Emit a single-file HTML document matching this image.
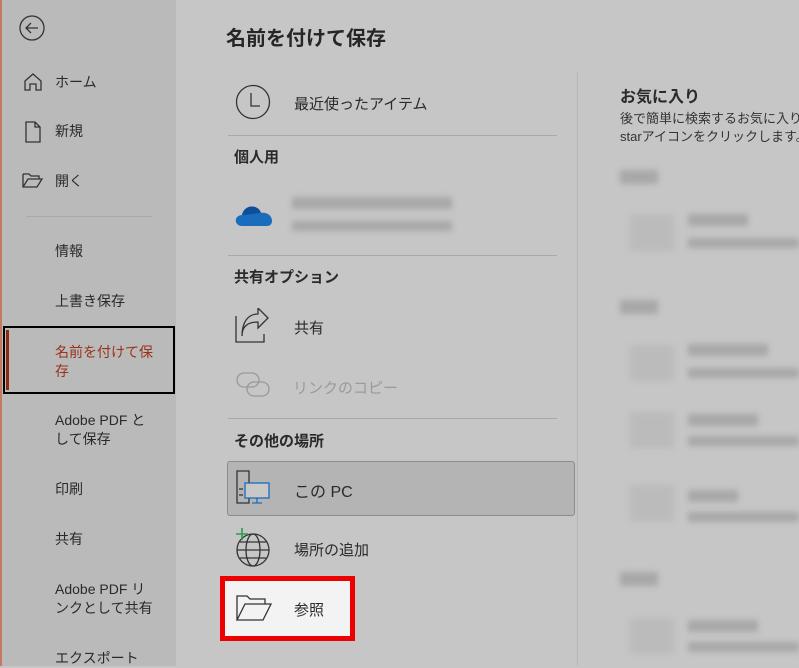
<!DOCTYPE html>
<html><head><meta charset="utf-8"><style>
*{margin:0;padding:0;box-sizing:border-box}
body{width:799px;height:666px;overflow:hidden;background:#c6c6c6;font-family:"Liberation Sans","Noto Sans CJK JP",sans-serif;color:#262626;position:relative}
.a{position:absolute}
#side{left:0;top:0;width:176px;height:666px;background:#bababa;border-left:2px solid #c27a62}
.nav{font-size:14px;color:#2a2a2a;line-height:19px;white-space:nowrap}
.h{font-size:15px;font-weight:bold;color:#2a2a2a}
.it{font-size:15px;color:#2a2a2a}
.hr{height:1px;background:#a9a9a9}
.bl{filter:blur(3px);background:#a8a8a8}
</style></head><body>
<div id="side" class="a"></div>
<svg class="a" style="left:18px;top:14px" width="28" height="28" viewBox="0 0 28 28" fill="none" stroke="#333" stroke-width="1.3"><circle cx="14" cy="14" r="12"/><path d="M20 14H8M13 9l-5 5 5 5"/></svg>
<svg class="a" style="left:23px;top:72px" width="20" height="20" viewBox="0 0 20 20" fill="none" stroke="#333" stroke-width="1.3"><path d="M2 9L10 2l8 7v9h-5v-6H7v6H2z"/></svg>
<div class="a nav" style="left:55px;top:73px">ホーム</div>
<svg class="a" style="left:24px;top:121px" width="18" height="22" viewBox="0 0 18 22" fill="none" stroke="#333" stroke-width="1.3"><path d="M2 1h9l5 5v15H2zM11 1v5h5"/></svg>
<div class="a nav" style="left:55px;top:122px">新規</div>
<svg class="a" style="left:22px;top:172px" width="22" height="18" viewBox="0 0 22 18" fill="none" stroke="#333" stroke-width="1.3"><path d="M1 2h6l2 2h8v3M1 2v13h14l5-8H6L1 15"/></svg>
<div class="a nav" style="left:55px;top:172px">開く</div>
<div class="a hr" style="left:26px;top:216px;width:126px"></div>
<div class="a nav" style="left:55px;top:242px">情報</div>
<div class="a nav" style="left:55px;top:292px">上書き保存</div>
<div class="a" style="left:3px;top:326px;width:172px;height:68px;border:2px solid #000"></div>
<div class="a" style="left:6px;top:330px;width:3px;height:60px;background:#8b2c12"></div>
<div class="a nav" style="left:55px;top:343px;color:#9a3218">名前を付けて保<br>存</div>
<div class="a nav" style="left:55px;top:411px">Adobe PDF と<br>して保存</div>
<div class="a nav" style="left:55px;top:480px">印刷</div>
<div class="a nav" style="left:55px;top:530px">共有</div>
<div class="a nav" style="left:55px;top:580px">Adobe PDF リ<br>ンクとして共有</div>
<div class="a nav" style="left:55px;top:649px">エクスポート</div>

<div class="a" style="left:226px;top:22px;font-size:20px;font-weight:bold;color:#262626">名前を付けて保存</div>
<svg class="a" style="left:235px;top:84px" width="36" height="36" viewBox="0 0 36 36" fill="none" stroke="#333" stroke-width="1.3"><circle cx="18" cy="18" r="16.5"/><path d="M16 9v13h9"/></svg>
<div class="a it" style="left:294px;top:93px">最近使ったアイテム</div>
<div class="a hr" style="left:228px;top:135px;width:329px"></div>
<div class="a h" style="left:234px;top:146px">個人用</div>
<svg class="a" style="left:234px;top:200px" width="40" height="28" viewBox="0 0 40 28"><path d="M8 26C3 26 1 22 2 19c1-3 4-4 6-4 1-6 7-10 13-8 3 1 5 3 6 6 5-1 11 2 11 8 0 3-2 5-5 5z" fill="#1a6dbd"/><path d="M8 15c1-6 7-10 13-8 3 1 5 3 6 6-5 0-10 2-19 2z" fill="#0f4f99"/></svg>
<div class="a bl" style="left:292px;top:197px;width:160px;height:12px"></div>
<div class="a bl" style="left:292px;top:221px;width:160px;height:10px"></div>
<div class="a hr" style="left:228px;top:255px;width:329px"></div>
<div class="a h" style="left:234px;top:266px">共有オプション</div>
<svg class="a" style="left:234px;top:308px" width="38" height="36" viewBox="0 0 38 36" fill="none" stroke="#333" stroke-width="1.3"><path d="M2 8v26h28v-8"/><path d="M8 28c0-10 6-14 16-14v6l10-10-10-10v6C14 6 8 14 8 28z"/></svg>
<div class="a it" style="left:294px;top:317px">共有</div>
<svg class="a" style="left:235px;top:370px" width="38" height="30" viewBox="0 0 38 30" fill="none" stroke="#999" stroke-width="1.3"><rect x="2" y="3" width="22" height="14" rx="7"/><rect x="12" y="12" width="22" height="14" rx="7"/></svg>
<div class="a it" style="left:293px;top:377px;color:#9a9a9a">リンクのコピー</div>
<div class="a hr" style="left:228px;top:418px;width:329px"></div>
<div class="a h" style="left:234px;top:430px">その他の場所</div>
<div class="a" style="left:227px;top:461px;width:348px;height:55px;background:#b4b4b4;border:1px solid #8c8c8c;border-radius:3px"></div>
<svg class="a" style="left:235px;top:469px" width="40" height="40" viewBox="0 0 40 40" fill="none" stroke-width="1.3"><path d="M2 2h12v32H2z" stroke="#333"/><path d="M4 20h4M4 26h4" stroke="#333"/><rect x="10" y="14" width="24" height="15" fill="#c8c8c8" stroke="#1a6dbd"/><path d="M22 29v5M17 34h10" stroke="#1a6dbd"/></svg>
<div class="a it" style="left:294px;top:478px;font-size:16px">この PC</div>
<svg class="a" style="left:233px;top:527px" width="40" height="40" viewBox="0 0 40 40" fill="none" stroke="#333" stroke-width="1.3"><circle cx="20" cy="23" r="16"/><ellipse cx="20" cy="23" rx="7" ry="16"/><path d="M4 23h32M7 15h26M7 31h26"/><path d="M9 1v12M3 7h12" stroke="#2e9a4a" stroke-width="1.6"/></svg>
<div class="a it" style="left:294px;top:539px">場所の追加</div>
<div class="a" style="left:220px;top:576px;width:135px;height:65px;background:#f3f3f3;border:5px solid #ee0000"></div>
<svg class="a" style="left:235px;top:594px" width="40" height="30" viewBox="0 0 40 30" fill="none" stroke="#333" stroke-width="1.3"><path d="M2 26V2h10l3 3h15v5M2 26h26l8-16H10z"/></svg>
<div class="a it" style="left:294px;top:599px">参照</div>

<div class="a" style="left:577px;top:72px;width:1px;height:594px;background:#b8b8b8"></div>
<div class="a h" style="left:620px;top:83px;font-size:16px">お気に入り</div>
<div class="a" style="left:620px;top:110px;font-size:13px;color:#333;line-height:18px;white-space:nowrap">後で簡単に検索するお気に入り<br>starアイコンをクリックします。</div>
<div class="a bl" style="left:620px;top:170px;width:38px;height:14px"></div>
<div class="a bl" style="left:630px;top:215px;width:44px;height:36px;background:#bbb"></div>
<div class="a bl" style="left:688px;top:214px;width:60px;height:12px"></div>
<div class="a bl" style="left:688px;top:238px;width:111px;height:10px"></div>
<div class="a bl" style="left:620px;top:300px;width:38px;height:14px"></div>
<div class="a bl" style="left:630px;top:345px;width:44px;height:36px;background:#bbb"></div>
<div class="a bl" style="left:688px;top:344px;width:80px;height:12px"></div>
<div class="a bl" style="left:688px;top:368px;width:111px;height:10px"></div>
<div class="a bl" style="left:630px;top:412px;width:44px;height:36px;background:#bbb"></div>
<div class="a bl" style="left:688px;top:414px;width:70px;height:12px"></div>
<div class="a bl" style="left:688px;top:436px;width:111px;height:10px"></div>
<div class="a bl" style="left:630px;top:485px;width:44px;height:36px;background:#bbb"></div>
<div class="a bl" style="left:688px;top:490px;width:50px;height:12px"></div>
<div class="a bl" style="left:688px;top:512px;width:111px;height:10px"></div>
<div class="a bl" style="left:620px;top:572px;width:38px;height:14px"></div>
<div class="a bl" style="left:630px;top:618px;width:44px;height:36px;background:#bbb"></div>
<div class="a bl" style="left:688px;top:620px;width:70px;height:12px"></div>
<div class="a bl" style="left:688px;top:642px;width:111px;height:10px"></div>
</body></html>
